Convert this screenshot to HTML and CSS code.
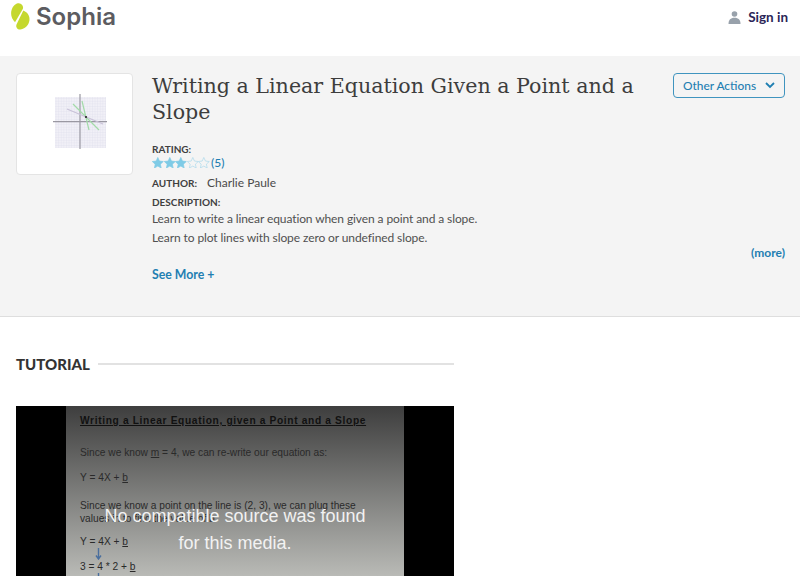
FILE: index.html
```html
<!DOCTYPE html>
<html lang="en">
<head>
  <meta charset="UTF-8" />
  <meta name="viewport" content="width=device-width, initial-scale=1.0"/>
  <title>Writing a Linear Equation Given a Point and a Slope</title>
  <link rel="stylesheet" href="styles.css">
</head>
<body>
  <header class="topbar">
    <a class="logo" href="#">
      <svg class="logo-mark" width="19" height="27" viewBox="0 0 19 27">
        <path d="M7 0.300C4 0.800 0.300 4.500 0.100 10C0 13.500 1.500 17 4 19.300L11.800 6C12.800 3.500 10.800 -0.300 7 0.300Z" fill="#c5d82e"/>
        <path d="M12.300 7.500C16 9 18.400 12 18.500 16C18.600 21 14.500 26 9.500 26.500C6.500 26.800 4.500 24.500 5.500 21.500Z" fill="#c5d82e"/>
      </svg>
      <span class="logo-text">Sophia</span>
    </a>
    <a class="signin" href="#">
      <svg width="13" height="13" viewBox="0 0 13 13">
        <circle cx="6.500" cy="3" r="2.800" fill="#98a1ab"/>
        <path d="M0.500 13C0.500 9 2.500 6.800 6.500 6.800C10.500 6.800 12.500 9 12.500 13Z" fill="#98a1ab"/>
      </svg>
      <span>Sign in</span>
    </a>
  </header>

  <section class="summary">
    <div class="thumb">
      <svg width="56" height="56" viewBox="0 0 56 56">
        <defs>
          <pattern id="grid" width="2.600" height="2.600" patternUnits="userSpaceOnUse">
            <path d="M2.600 0H0V2.600" fill="none" stroke="#dcdbea" stroke-width="0.600"/>
          </pattern>
        </defs>
        <rect x="2" y="4" width="51" height="51" fill="#f1f0f7"/>
        <rect x="2" y="4" width="51" height="51" fill="url(#grid)"/>
        <path d="M0 28.700H54M27 1V56" stroke="#9a98a2" stroke-width="1.200"/>
        <path d="M20 11L46 37M29 8L36 37" stroke="#a3dba9" stroke-width="1.200"/>
        <path d="M14 16L50 31" stroke="#c9c2d8" stroke-width="1.200"/>
        <circle cx="33" cy="24" r="1.100" fill="#222"/>
      </svg>
    </div>
    <div class="info">
      <div class="title-row">
        <h1>Writing a Linear Equation Given a Point and a Slope</h1>
        <button class="actions">Other Actions
          <svg width="10" height="7" viewBox="0 0 10 7"><path d="M1 1L5 5L9 1" fill="none" stroke="#1f7fb2" stroke-width="1.800"/></svg>
        </button>
      </div>
      <div class="label rating-label">RATING:</div>
      <div class="rating">
        <svg class="star on" viewBox="0 0 12 12"><path d="M6 0.500L7.700 4.200L11.700 4.700L8.700 7.400L9.500 11.400L6 9.400L2.500 11.400L3.300 7.400L0.300 4.700L4.300 4.200Z"/></svg>
        <svg class="star on" viewBox="0 0 12 12"><path d="M6 0.500L7.700 4.200L11.700 4.700L8.700 7.400L9.500 11.400L6 9.400L2.500 11.400L3.300 7.400L0.300 4.700L4.300 4.200Z"/></svg>
        <svg class="star on" viewBox="0 0 12 12"><path d="M6 0.500L7.700 4.200L11.700 4.700L8.700 7.400L9.500 11.400L6 9.400L2.500 11.400L3.300 7.400L0.300 4.700L4.300 4.200Z"/></svg>
        <svg class="star" viewBox="0 0 12 12"><path d="M6 0.500L7.700 4.200L11.700 4.700L8.700 7.400L9.500 11.400L6 9.400L2.500 11.400L3.300 7.400L0.300 4.700L4.300 4.200Z"/></svg>
        <svg class="star" viewBox="0 0 12 12"><path d="M6 0.500L7.700 4.200L11.700 4.700L8.700 7.400L9.500 11.400L6 9.400L2.500 11.400L3.300 7.400L0.300 4.700L4.300 4.200Z"/></svg>
        <a href="#">(5)</a>
      </div>
      <div class="author"><span class="label">AUTHOR:</span><span>Charlie Paule</span></div>
      <div class="label">DESCRIPTION:</div>
      <p class="desc">Learn to write a linear equation when given a point and a slope.</p>
      <p class="desc">Learn to plot lines with slope zero or undefined slope.</p>
      <div class="more"><a href="#">(more)</a></div>
      <a class="see-more" href="#">See More +</a>
    </div>
  </section>

  <section class="tutorial">
    <div class="tutorial-head">
      <h2>TUTORIAL</h2>
      <span class="rule"></span>
    </div>
    <div class="player">
      <div class="slide">
        <p class="slide-title">Writing a Linear Equation, given a Point and a Slope</p>
        <p class="gap-a">Since we know <u>m</u> = 4, we can re-write our equation as:</p>
        <p class="gap-b">Y = 4X + <u>b</u></p>
        <p class="gap-c">Since we know a point on the line is (2, 3), we can plug these<br>values in to find the value of b.</p>
        <p class="gap-d">Y = 4X + <u>b</u></p>
        <svg class="arrow" width="7" height="12" viewBox="0 0 7 12"><path d="M3.500 0V10M1 7.500L3.500 11L6 7.500" fill="none" stroke="#4a6f9e" stroke-width="1.400"/></svg>
        <p>3 = 4 * 2 + <u>b</u></p>
        <svg class="arrow" width="7" height="12" viewBox="0 0 7 12"><path d="M3.500 0V10M1 7.500L3.500 11L6 7.500" fill="none" stroke="#4a6f9e" stroke-width="1.400"/></svg>
      </div>
      <div class="error">No compatible source was found for this media.</div>
    </div>
  </section>
</body>
</html>
```

FILE: styles.css
```css
html, body {
  height: 576px;
  overflow: hidden;
}

body {
  margin: 0;
  background-color: white;
  font-family: Lato, "Open Sans", sans-serif;
  color: #4a4a4a;
}

a {
  text-decoration: none;
}

.topbar {
  height: 56px;
  box-sizing: border-box;
  padding: 3px 12px 0 11px;
  display: flex;
  justify-content: space-between;
  align-items: flex-start;
}

.logo {
  display: flex;
  align-items: center;
  gap: 6px;
}

.logo-text {
  font-family: Inter, Lato, sans-serif;
  font-size: 24px;
  font-weight: 600;
  color: #5c5c60;
  line-height: 27px;
}

.signin {
  display: flex;
  align-items: center;
  gap: 7px;
  margin-top: 6px;
  font-size: 13.500px;
  font-weight: 700;
  color: #2b2557;
}

.summary {
  height: 261px;
  box-sizing: border-box;
  padding: 17px 15px 0 16px;
  display: flex;
  gap: 19px;
  background-color: #f4f4f4;
  border-bottom: 1px solid #dedede;
}

.thumb {
  width: 117px;
  height: 102px;
  box-sizing: border-box;
  padding: 0 0 6px 13px;
  flex-shrink: 0;
  display: flex;
  align-items: center;
  justify-content: center;
  background-color: white;
  border: 1px solid #e4e4e4;
  border-radius: 4px;
}

.info {
  flex: 1;
}

.title-row {
  display: flex;
  justify-content: space-between;
  align-items: flex-start;
  min-height: 62px;
}

h1 {
  margin: 0;
  width: 500px;
  font-family: "DejaVu Serif", serif;
  font-size: 20.600px;
  font-weight: 400;
  line-height: 26px;
  color: #3d3d3d;
}

.actions {
  width: 112px;
  height: 25px;
  padding: 0;
  display: flex;
  align-items: center;
  justify-content: center;
  gap: 9px;
  background-color: transparent;
  border: 1px solid #3f94bf;
  border-radius: 4px;
  font-family: inherit;
  font-size: 11.900px;
  font-weight: 500;
  color: #1f7fb2;
}

.label {
  font-size: 10px;
  font-weight: 700;
  line-height: 14px;
  color: #3f3f3f;
}

.rating-label {
  margin-top: 7px;
}

.rating {
  display: flex;
  align-items: center;
  height: 13px;
  font-size: 12px;
}

.rating a {
  margin-left: 1px;
  color: #1f7fb2;
  font-weight: 500;
}

.star {
  width: 11.600px;
  height: 11.600px;
  fill: none;
  stroke: #a9d9ec;
  stroke-width: 0.700;
}

.star.on {
  fill: #7fcbe6;
  stroke: #7fcbe6;
}

.author {
  display: flex;
  align-items: center;
  gap: 10px;
  margin-top: 6px;
  margin-bottom: 4px;
  font-size: 12px;
  line-height: 16px;
}

.desc {
  margin: 0;
  font-size: 12px;
  letter-spacing: -0.100px;
  line-height: 19px;
  color: #505050;
}

.more {
  text-align: right;
  font-size: 12px;
  font-weight: 700;
  margin-top: -2px;
  line-height: 16px;
}

.more a, .see-more {
  color: #1f7fb2;
}

.see-more {
  display: block;
  margin-top: 6px;
  font-size: 12.300px;
  font-weight: 700;
}

.tutorial {
  width: 438px;
  margin-left: 16px;
}

.tutorial-head {
  display: flex;
  align-items: center;
  gap: 8px;
  margin-top: 38px;
}

h2 {
  margin: 0;
  font-size: 15px;
  font-weight: 900;
  line-height: 18px;
  color: #333;
}

.rule {
  flex: 1;
  height: 2px;
  background-color: #e2e2e2;
}

.player {
  position: relative;
  height: 170px;
  margin-top: 33px;
  padding: 0 50px;
  background-color: black;
}

.slide {
  height: 100%;
  box-sizing: border-box;
  padding: 8px 14px;
  overflow: hidden;
  background: linear-gradient(#3e3e3e, #b9bab6);
  font-family: "Liberation Sans", Arial, sans-serif;
  font-size: 10.200px;
  line-height: 13px;
  color: #2a2a2a;
}

.slide p {
  margin: 0;
  white-space: nowrap;
}

.slide .slide-title {
  font-weight: 700;
  color: #111;
  text-decoration: underline;
  letter-spacing: 0.650px;
}

.slide .gap-a {
  margin-top: 19px;
}

.slide .gap-b {
  margin-top: 12px;
}

.slide .gap-c {
  margin-top: 15px;
}

.slide .gap-d {
  margin-top: 10px;
}

.arrow {
  display: block;
  margin-left: 15px;
}

.error {
  position: absolute;
  left: 84px;
  top: 97px;
  width: 270px;
  text-align: center;
  font-family: "Liberation Sans", Arial, sans-serif;
  font-size: 18px;
  line-height: 27px;
  color: #f2f2f2;
}
```
